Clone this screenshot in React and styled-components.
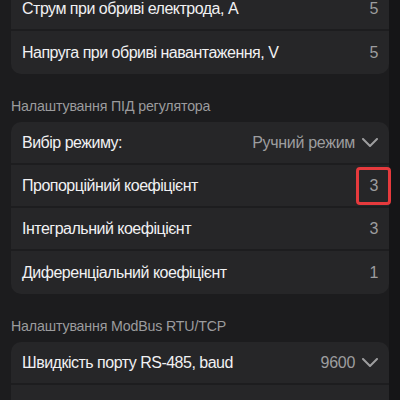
import React from "react"
import styled, { createGlobalStyle } from "styled-components"

const GlobalStyle = createGlobalStyle`
    html, body {
        margin: 0;
        padding: 0;
        background: #151517;
        overflow: hidden;
    }
    body {
        font-family: "Liberation Sans", Arial, sans-serif;
    }
`

const Screen = styled.div`
    display: flex;
    width: 400px;
    height: 400px;
    overflow: hidden;
`

const Content = styled.div`
    width: 389px;
    padding-left: 11px;
    box-sizing: border-box;
    background: #1c1c1e;
`

const ScrollTrack = styled.div`
    flex: 1;
    background: #151517;
`

const Scroller = styled.div`
    margin-top: -12px;
`

const SectionTitle = styled.div`
    color: #9b9b9d;
    font-size: 14.2px;
    letter-spacing: -0.15px;
    line-height: 18px;
    padding: 23px 0 7px 0;
`

const Card = styled.div`
    background: #262628;
    border-radius: 10px;
`

const Row = styled.div`
    position: relative;
    display: flex;
    align-items: center;
    justify-content: space-between;
    height: 43px;
    box-sizing: border-box;
    padding: 0 11px;
    border-bottom: 2px solid #1d1d1f;

    &:last-child {
        border-bottom: none;
    }
`

const Label = styled.span`
    color: #f1f1f3;
    font-size: 16px;
    letter-spacing: -0.5px;
`

const Value = styled.span`
    display: flex;
    align-items: center;
    gap: 7px;
    color: #9d9d9f;
    font-size: 16px;
    letter-spacing: -0.3px;
`

const Highlight = styled.div`
    position: absolute;
    right: -2px;
    top: 2px;
    width: 35px;
    height: 38px;
    box-sizing: border-box;
    border: 3px solid #e63a3d;
    border-radius: 4px;
`

const Chevron = () => (
    <svg width="16" height="9" viewBox="0 0 16 9" fill="none">
        <path d="M1 1l7 7 7-7" stroke="#9d9d9f" strokeWidth="2" strokeLinecap="round" strokeLinejoin="round" />
    </svg>
)

const SettingRow = ({ label, value, select, marked }) => (
    <Row>
        <Label>{label}</Label>
        <Value>
            {value}
            {select && <Chevron />}
        </Value>
        {marked && <Highlight />}
    </Row>
)

export default function App() {
    return (
        <Screen>
            <GlobalStyle />
            <Content>
                <Scroller>
                    <Card>
                        <SettingRow label="Струм при обриві електрода, А" value="5" />
                        <SettingRow label="Напруга при обриві навантаження, V" value="5" />
                    </Card>

                    <SectionTitle>Налаштування ПІД регулятора</SectionTitle>
                    <Card>
                        <SettingRow label="Вибір режиму:" value="Ручний режим" select />
                        <SettingRow label="Пропорційний коефіцієнт" value="3" marked />
                        <SettingRow label="Інтегральний коефіцієнт" value="3" />
                        <SettingRow label="Диференціальний коефіцієнт" value="1" />
                    </Card>

                    <SectionTitle>Налаштування ModBus RTU/TCP</SectionTitle>
                    <Card>
                        <SettingRow label="Швидкість порту RS-485, baud" value="9600" select />
                        <Row />
                    </Card>
                </Scroller>
            </Content>
            <ScrollTrack />
        </Screen>
    )
}
